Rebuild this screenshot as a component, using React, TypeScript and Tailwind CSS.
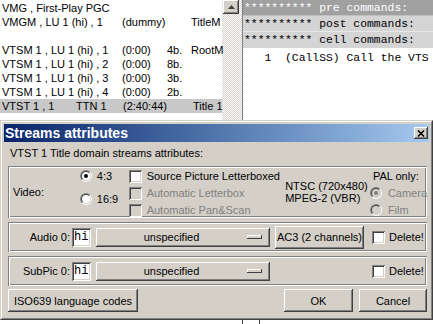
import React from "react";

const raised =
  "shadow-[inset_-1px_-1px_0_#404040,inset_1px_1px_0_#fff,inset_-2px_-2px_0_#808080,inset_2px_2px_0_#d4d0c8]";
const etched =
  "shadow-[inset_1px_1px_0_#808080,inset_-1px_-1px_0_#fff,inset_2px_2px_0_#fff,inset_-2px_-2px_0_#808080]";
const sunken =
  "shadow-[inset_1px_1px_0_#808080,inset_-1px_-1px_0_#fff,inset_2px_2px_0_#404040,inset_-2px_-2px_0_#d4d0c8]";

const listRows = [
  ["VMG , First-Play PGC", "", "", "", ""],
  ["VMGM , LU 1 (hi) , 1", "", "(dummy)", "", "TitleM"],
  ["", "", "", "", ""],
  ["VTSM 1 , LU 1 (hi) , 1", "", "(0:00)", "4b.", "RootM"],
  ["VTSM 1 , LU 1 (hi) , 2", "", "(0:00)", "8b.", ""],
  ["VTSM 1 , LU 1 (hi) , 3", "", "(0:00)", "3b.", ""],
  ["VTSM 1 , LU 1 (hi) , 4", "", "(0:00)", "2b.", ""],
];

const Radio = ({ checked = false, disabled = false }: { checked?: boolean; disabled?: boolean }) => (
  <span className="relative w-3 h-3 shrink-0 rounded-full border border-t-[#808080] border-l-[#808080] border-b-white border-r-white">
    <span
      className={`absolute inset-0 rounded-full border border-t-[#404040] border-l-[#404040] border-b-[#d4d0c8] border-r-[#d4d0c8] flex items-center justify-center ${
        disabled ? "bg-[#d4d0c8]" : "bg-white"
      }`}
    >
      {checked && <span className={`w-1 h-1 rounded-full ${disabled ? "bg-[#808080]" : "bg-black"}`} />}
    </span>
  </span>
);

const Check = ({ disabled = false }: { disabled?: boolean }) => (
  <span className={`w-[13px] h-[13px] shrink-0 ${sunken} ${disabled ? "bg-[#d4d0c8]" : "bg-white"}`} />
);

const Btn = ({ className = "", children }: { className?: string; children: React.ReactNode }) => (
  <div className={`h-[23px] bg-[#d4d0c8] ${raised} flex items-center justify-center ${className}`}>{children}</div>
);

const Field = () => (
  <div className={`w-[19px] h-[19px] bg-white ${sunken} pl-[2px] pt-[2px] font-['Liberation_Mono',monospace] text-[12px] leading-[15px]`}>
    hi
  </div>
);

const Combo = () => (
  <div className={`w-[174px] h-[19px] bg-[#d4d0c8] ${raised} flex items-center`}>
    <span className="flex-1 text-center">unspecified</span>
    <span className="w-[15px] h-[4px] mr-[8px] bg-[#d4d0c8] shadow-[inset_-1px_-1px_0_#404040,inset_1px_1px_0_#fff]" />
  </div>
);

const Delete = () => (
  <div className="flex items-center gap-[4px] ml-[8px]">
    <Check />
    <span>Delete!</span>
  </div>
);

export default function App() {
  return (
    <div className="w-[433px] h-[324px] overflow-hidden bg-white text-black font-['Liberation_Sans',Arial,sans-serif] text-[11px] leading-[14px]">
      <div className="flex h-[120px]">
        <div className="w-[222px] pt-[1px] bg-white">
          {listRows.map((r, i) => (
            <div key={i} className="relative h-[14px] whitespace-nowrap">
              <span className="absolute left-[2px]">{r[0]}</span>
              <span className="absolute left-[122px]">{r[2]}</span>
              <span className="absolute left-[167px]">{r[3]}</span>
              <span className="absolute left-[191px]">{r[4]}</span>
            </div>
          ))}
          <div className="relative h-[14px] whitespace-nowrap bg-[#c8c8c8]">
            <span className="absolute left-[2px]">VTST 1 , 1</span>
            <span className="absolute left-[76px]">TTN 1</span>
            <span className="absolute left-[123px]">(2:40:44)</span>
            <span className="absolute left-[193px]">Title 1</span>
          </div>
        </div>
        <div className="w-[20px] bg-[repeating-conic-gradient(#d4d0c8_0_25%,#fff_0_50%)] bg-[length:2px_2px]">
          <div className={`ml-[1px] w-[16px] h-[14px] bg-[#d4d0c8] ${raised} flex items-center justify-center`}>
            <svg width="7" height="4" viewBox="0 0 7 4">
              <path d="M3.5 0 L7 4 L0 4 Z" fill="#404040" />
            </svg>
          </div>
        </div>
        <div className="w-px bg-[#808080]" />
        <div className="flex-1 bg-white font-['Liberation_Mono',monospace] text-[11.4px] whitespace-pre">
          <div className="h-[16px] leading-[16px] bg-[#a0a0a0] text-white pl-[1px] border-b border-[#c0c0c0]">********** pre commands:</div>
          <div className="h-[16px] leading-[16px] bg-[#d4d4d4] pl-[1px] border-b border-[#e8e8e8]">********** post commands:</div>
          <div className="h-[16px] leading-[16px] bg-[#d4d4d4] pl-[1px]">********** cell commands:</div>
          <div className="h-[16px] leading-[16px] pt-[2px] pl-[1px]">   1  (CallSS) Call the VTS</div>
        </div>
      </div>

      <div className="h-[200px] border border-t-[#d4d0c8] border-l-[#d4d0c8] border-r-[#404040] border-b-[#404040]">
        <div className="h-full border border-t-white border-l-white border-r-[#808080] border-b-[#808080] bg-[#d4d0c8] p-[2px] flex flex-col">
          <div className="h-[18px] bg-gradient-to-r from-[#0a246a] to-[#a6caf0] flex items-center justify-between">
            <span className="pl-[1px] text-white font-bold text-[14px]">Streams attributes</span>
            <div className={`w-[14px] h-[12px] mr-[1px] bg-[#d4d0c8] ${raised} flex items-center justify-center`}>
              <svg width="8" height="7" viewBox="0 0 8 7">
                <path d="M1 0.5 L7 6.5 M7 0.5 L1 6.5" stroke="#000" strokeWidth="1.6" />
              </svg>
            </div>
          </div>

          <div className="flex-1 pt-[5px] pl-[4px] pr-[2px] flex flex-col">
            <div className="pl-[2px] h-[12px] leading-[12px]">VTST 1 Title domain streams attributes:</div>

            <div className={`mt-[7px] h-[52px] ${etched} flex items-start`}>
              <div className="w-[72px] pl-[5px] self-center">Video:</div>
              <div className="w-[49px] pt-[3px] flex flex-col gap-[9px]">
                <div className="h-[14px] flex items-center gap-[5px]">
                  <Radio checked />
                  <span>4:3</span>
                </div>
                <div className="h-[14px] flex items-center gap-[5px]">
                  <Radio />
                  <span>16:9</span>
                </div>
              </div>
              <div className="w-[157px] pt-[3px] flex flex-col gap-[3px]">
                <div className="h-[14px] flex items-center gap-[5px]">
                  <Check />
                  <span>Source Picture Letterboxed</span>
                </div>
                <div className="h-[14px] flex items-center gap-[5px] text-[#808080]">
                  <Check disabled />
                  <span>Automatic Letterbox</span>
                </div>
                <div className="h-[14px] flex items-center gap-[5px] text-[#808080]">
                  <Check disabled />
                  <span>Automatic Pan&amp;Scan</span>
                </div>
              </div>
              <div className="w-[85px] pt-[14px] leading-[12px]">
                <div>NTSC (720x480)</div>
                <div>MPEG-2 (VBR)</div>
              </div>
              <div className="pt-[3px] flex flex-col gap-[3px]">
                <div className="h-[14px] pl-[3px]">PAL only:</div>
                <div className="h-[14px] flex items-center gap-[6px] text-[#808080]">
                  <Radio checked disabled />
                  <span>Camera</span>
                </div>
                <div className="h-[14px] flex items-center gap-[6px] text-[#808080]">
                  <Radio disabled />
                  <span>Film</span>
                </div>
              </div>
            </div>

            <div className={`mt-[4px] h-[30px] ${etched} flex items-center`}>
              <div className="w-[62px] text-right">Audio 0:</div>
              <div className="ml-[2px]"><Field /></div>
              <div className="ml-[5px]"><Combo /></div>
              <Btn className="ml-[5px] w-[89px] h-[19px]">AC3 (2 channels)</Btn>
              <Delete />
            </div>

            <div className={`mt-[4px] h-[30px] ${etched} flex items-center`}>
              <div className="w-[62px] text-right">SubPic 0:</div>
              <div className="ml-[2px]"><Field /></div>
              <div className="ml-[5px]"><Combo /></div>
              <div className="ml-[5px] w-[89px]" />
              <Delete />
            </div>

            <div className="mt-[3px] flex items-center">
              <Btn className="w-[130px]">ISO639 language codes</Btn>
              <div className="flex-1" />
              <Btn className="w-[69px]">OK</Btn>
              <Btn className="ml-[6px] w-[68px]">Cancel</Btn>
            </div>
          </div>
        </div>
      </div>

      <div className="h-[4px] flex bg-white">
        <div className="w-[242px]" />
        <div className="w-px bg-[#404040]" />
        <div className="w-[16px]" />
        <div className="w-px bg-[#404040]" />
      </div>
    </div>
  );
}
